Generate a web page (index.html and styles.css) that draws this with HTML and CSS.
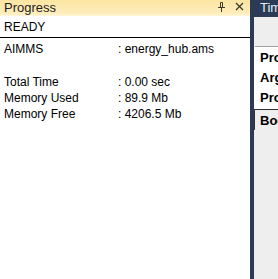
FILE: index.html
```html
<!DOCTYPE html>
<html>
<head>
    <title>Progress</title>
    <link rel="stylesheet" href="styles.css">
</head>
<body>
<div class="progress">
    <div class="panel-head">
        <span class="panel-title">Progress</span>
        <svg class="pin" width="7" height="11" viewBox="0 0 7 11">
            <path d="M2.5 1.5h2v5h-2z M0 6.5h7 M3.5 7v4" fill="none" stroke="#3f3a28" stroke-width="1"/>
        </svg>
        <svg class="close" width="9" height="9" viewBox="0 0 9 9">
            <path d="M1 1l7 7M8 1l-7 7" stroke="#3f3a28" stroke-width="1.3"/>
        </svg>
    </div>
    <div class="status">READY</div>
    <div class="info">
        <span>AIMMS</span><span>: energy_hub.ams</span>
        <span class="blank"></span><span class="blank"></span>
        <span>Total Time</span><span>: 0.00 sec</span>
        <span>Memory Used</span><span>: 89.9 Mb</span>
        <span>Memory Free</span><span>: 4206.5 Mb</span>
    </div>
</div>
<div class="divider"></div>
<div class="side">
    <div class="side-head">Timeline</div>
    <div class="side-tools"></div>
    <div class="side-list">
        <div class="side-row">Progress</div>
        <div class="side-row">Arguments</div>
        <div class="side-row">Procedures</div>
    </div>
    <div class="side-row side-foot">Body</div>
</div>
</body>
</html>
```

FILE: styles.css
```css
body {
    margin: 0;
    display: flex;
    height: 279px;
    overflow: hidden;
    font-family: "Liberation Sans", Arial, sans-serif;
    font-size: 12px;
    color: #000000;
    background-color: #FFFFFF;
}

/* Progress tool window */
.progress {
    width: 250px;
    flex: none;
    background-color: #FFFFFF;
}

.panel-head {
    height: 16px;
    display: flex;
    align-items: center;
    padding-left: 4px;
    background: linear-gradient(#FCE5A2, #FEEDBD 85%, #FFF6DC);
    color: #1E1E1E;
    font-size: 13px;
}

.panel-title {
    flex: 1;
    margin-top: -1px;
}

.pin {
    margin-right: 10px;
    margin-top: -4px;
}

.close {
    margin-right: 6px;
    margin-top: -3px;
}

.status {
    height: 21px;
    line-height: 22px;
    padding-left: 4px;
    border-bottom: 1px solid #000000;
}

.info {
    display: grid;
    grid-template-columns: 114px auto;
    padding: 3px 0 0 4px;
    line-height: 16px;
}

.blank {
    height: 17px;
}

.divider {
    width: 4px;
    flex: none;
    background-color: #2B3A55;
}

/* Neighbouring window, mostly cut off */
.side {
    flex: 1;
    overflow: hidden;
    white-space: nowrap;
    background-color: #EEEEEE;
}

.side-head {
    height: 17px;
    line-height: 15px;
    padding-left: 6px;
    background-color: #2B3A55;
    color: #E6EEF6;
    font-size: 13px;
}

.side-tools {
    height: 29px;
    margin-left: 1px;
    background-color: #EEEEEE;
    border-bottom: 1px solid #A0A0A0;
}

.side-list {
    background-color: #FFFFFF;
    padding-bottom: 2px;
}

.side-row {
    height: 20px;
    line-height: 21px;
    padding-left: 6px;
    font-weight: bold;
    font-size: 13px;
}

.side-foot {
    border-top: 1px solid #333333;
    border-left: 1px solid #333333;
    padding-left: 5px;
    line-height: 22px;
}
```
